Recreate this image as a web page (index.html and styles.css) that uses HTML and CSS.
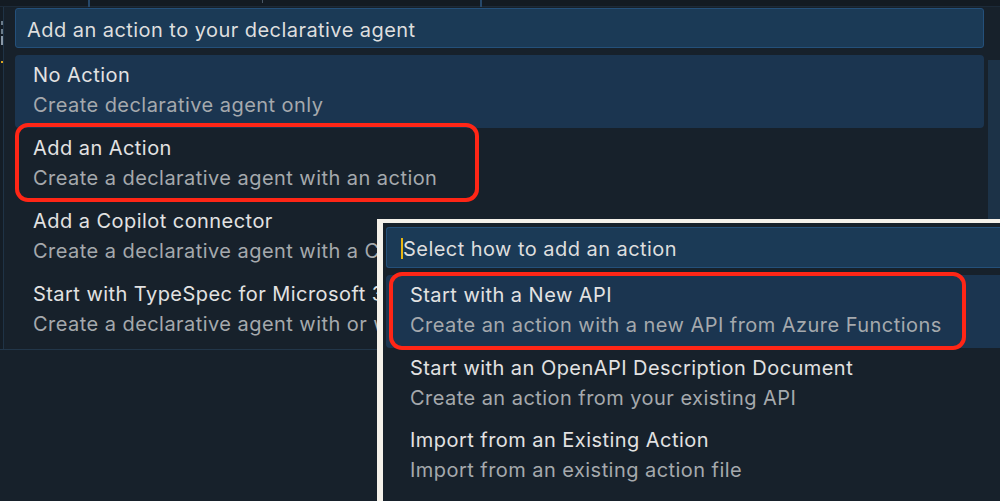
FILE: index.html
```html
<!DOCTYPE html>
<html lang="en">
<head>
<meta charset="utf-8">
<title>Add an action</title>
<link rel="stylesheet" href="styles.css">
</head>
<body>
<div class="screen">
  <div class="topbar">
    <span class="tab t1"></span>
    <span class="tab t2"></span>
    <span class="tab t3"></span>
  </div>
  <div class="workspace">
    <div class="gutter">
      <span class="mark m1"></span>
      <span class="mark m2"></span>
      <span class="mark m3"></span>
      <span class="mark cur"></span>
    </div>
    <div class="picker picker-main">
      <div class="input">Add an action to your declarative agent</div>
      <div class="list-wrap">
        <div class="list">
          <div class="item active">
            <div class="title">No Action</div>
            <div class="desc">Create declarative agent only</div>
          </div>
          <div class="item marked mark-left">
            <div class="title">Add an Action</div>
            <div class="desc">Create a declarative agent with an action</div>
          </div>
          <div class="item">
            <div class="title">Add a Copilot connector</div>
            <div class="desc">Create a declarative agent with a Copilot connector</div>
          </div>
          <div class="item">
            <div class="title">Start with TypeSpec for Microsoft 365 Copilot</div>
            <div class="desc">Create a declarative agent with or without an action using TypeSpec</div>
          </div>
        </div>
        <div class="scrollbar"></div>
      </div>
    </div>
  </div>

  <div class="picker picker-inset">
    <div class="input"><span class="caret"></span>Select how to add an action</div>
    <div class="list">
      <div class="item active marked mark-right">
        <div class="title">Start with a New API</div>
        <div class="desc">Create an action with a new API from Azure Functions</div>
      </div>
      <div class="item">
        <div class="title">Start with an OpenAPI Description Document</div>
        <div class="desc">Create an action from your existing API</div>
      </div>
      <div class="item">
        <div class="title">Import from an Existing Action</div>
        <div class="desc">Import from an existing action file</div>
      </div>
      <div class="item">
        <div class="title">Start with a Microsoft Graph API or other OAuth-protected API</div>
        <div class="desc">Create an action from an API</div>
      </div>
    </div>
  </div>
</div>
</body>
</html>
```

FILE: styles.css
```css
*, *::before, *::after { box-sizing: border-box; }

html, body {
  margin: 0;
  padding: 0;
  background: #17212b;
}

.screen {
  position: relative;
  width: 1000px;
  height: 501px;
  overflow: hidden;
  background: #17212b;
  font-family: Inter, "Noto Sans", "Liberation Sans", sans-serif;
  font-size: 20px;
  letter-spacing: 0.45px;
  color: #dcdcdc;
}

.topbar {
  position: relative;
  height: 7px;
  background: #131b23;
  border-bottom: 1px solid #1c2a38;
}

.tab {
  position: absolute;
  top: 0;
  width: 2px;
  height: 7px;
  background: #26486a;
}
.t1 { left: 88px; }
.t2 { left: 262px; width: 1px; background: #4a5866; height: 3px; }
.t3 { left: 480px; }

.workspace {
  display: flex;
  height: 343px;
  border-bottom: 1px solid #223649;
}

.gutter {
  position: relative;
  width: 4px;
  border-right: 1px solid #1f3346;
  background: #141d26;
}
.mark {
  position: absolute;
  left: 1px;
  width: 2px;
  background: #6c7c8a;
}
.m1 { top: 14px; height: 4px; }
.m2 { top: 22px; height: 5px; }
.m3 { top: 29px; height: 9px; background: #8a98a6; }
.cur { top: 54px; height: 2px; background: #d9a520; }

.picker-main {
  flex: 1;
  padding-left: 11px;
  padding-top: 1px;
}

.input {
  height: 40px;
  line-height: 36px;
  padding-top: 3px;
  background: #1b3a56;
  border: 1px solid #24507a;
  border-radius: 3px;
  padding-left: 11px;
  color: #dedede;
  white-space: nowrap;
  overflow: hidden;
}

.picker-main .input {
  margin-right: 16px;
}

.list-wrap {
  display: flex;
  margin-top: 7px;
}

.list {
  flex: 1;
  min-width: 0;
}

.picker-main .list {
  margin-right: 4px;
}

.scrollbar {
  width: 12px;
  margin-top: 5px;
  background: #1c3247;
}

.item {
  position: relative;
  height: 73px;
  padding: 5px 0 8px 18px;
  white-space: nowrap;
  overflow: visible;
  border-radius: 4px;
}

.item.active {
  background: #1b3550;
}

.title {
  line-height: 30px;
  color: #e2e2e2;
  overflow: hidden;
}

.desc {
  line-height: 30px;
  color: #a5a9ad;
  overflow: hidden;
}

.marked::after {
  content: "";
  position: absolute;
  border: 4px solid #ff2616;
  border-radius: 13px;
  pointer-events: none;
}

.mark-left::after {
  left: 0;
  top: -5px;
  width: 464px;
  height: 79px;
}

.mark-right::after {
  left: 3px;
  top: -3px;
  width: 577px;
  height: 78px;
}

/* inset screenshot */
.picker-inset {
  position: absolute;
  left: 377px;
  top: 219px;
  width: 640px;
  height: 300px;
  background: #17212b;
  border-top: 4px solid #f4f1ea;
  border-left: 6px solid #f4f1ea;
  padding: 4px 0 0 3px;
}

.picker-inset .input {
  height: 41px;
  line-height: 38px;
  padding-top: 2px;
  padding-left: 16px;
  border-right: none;
  border-radius: 3px 0 0 3px;
  position: relative;
}

.caret {
  position: absolute;
  left: 14px;
  top: 10px;
  width: 2px;
  height: 21px;
  background: #e8b511;
}

.picker-inset .list {
  margin-top: 7px;
}

.picker-inset .item {
  padding-left: 24px;
  height: 72.5px;
}
```
